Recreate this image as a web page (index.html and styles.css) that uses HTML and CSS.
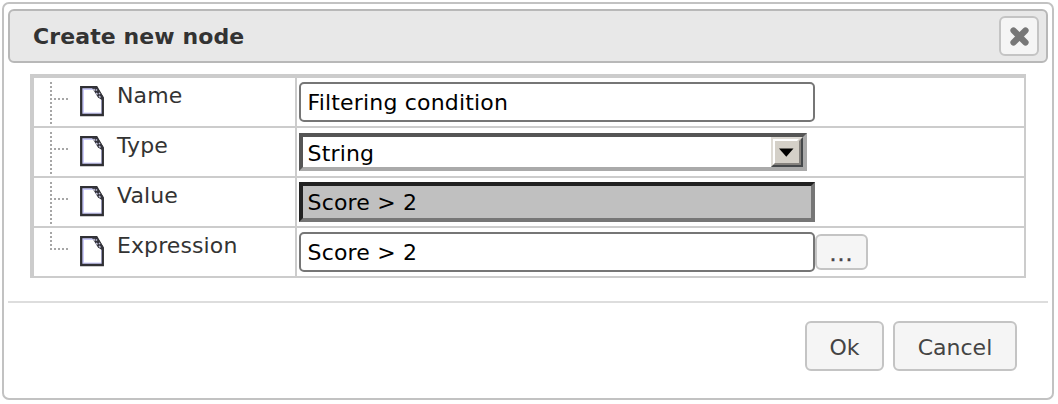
FILE: index.html
```html
<!DOCTYPE html>
<html lang="en">
<head>
<meta charset="utf-8">
<title>Create new node</title>
<link rel="stylesheet" href="styles.css">
</head>
<body>
<svg class="defs" width="0" height="0">
  <symbol id="doc" viewBox="0 0 28 34">
    <path d="M2 2H17.500L24 13V30H2Z" fill="#fff"/>
    <path d="M4 29V4H14M4 28.500H23V15" fill="none" stroke="#ccccfa" stroke-width="2"/>
    <path d="M2.200 2.200H17.500L23.800 13V30H2.200Z" fill="none" stroke="#303034" stroke-width="2.300"/>
    <path d="M12.500 2H18L24.500 12V16L19 12.500Z" fill="#34343c"/>
    <path d="M14.500 4l1.500 1.500M17 4.500l1 1M17 8l1.500 1.500M20 8l1 1M20 11l1.500 1.500" stroke="#c4c4dc" stroke-width="1.500"/>
  </symbol>
  <symbol id="branch" viewBox="0 0 22 48">
    <path d="M2 4V47M5 21H20" fill="none" stroke="#a6a6a6" stroke-width="2" stroke-dasharray="2 2"/>
  </symbol>
  <symbol id="last" viewBox="0 0 22 48">
    <path d="M2 4V21M1 21H20" fill="none" stroke="#a6a6a6" stroke-width="2" stroke-dasharray="2 2"/>
  </symbol>
</svg>
<div class="dialog">
  <header class="titlebar">
    <h1 class="title">Create new node</h1>
    <button class="btn close" aria-label="Close"><svg width="20" height="20" viewBox="0 0 20 20"><path d="M4.500 4.500L16.500 16.500M16.500 4.500L4.500 16.500" stroke="#777" stroke-width="6.200" stroke-linecap="round"/></svg></button>
  </header>
  <main class="grid">
    <div class="label"><svg class="tree"><use href="#branch"/></svg><svg class="doc"><use href="#doc"/></svg><span class="name">Name</span></div>
    <div class="cell"><div class="field">Filtering condition</div></div>
    <div class="label"><svg class="tree"><use href="#branch"/></svg><svg class="doc"><use href="#doc"/></svg><span class="name">Type</span></div>
    <div class="cell"><div class="select"><span>String</span><svg class="arrow" width="32" height="30" viewBox="0 0 32 30"><path d="M0 0H32V30H0Z" fill="#d4d0c8"/><path d="M0 0H32L28 2H2V28L0 30Z" fill="#dedbd5"/><path d="M2 2H28L26 4H4V26L2 28Z" fill="#fff"/><path d="M32 0V30H0L2 28H30V2Z" fill="#45484b"/><path d="M30 2V28H2L4 26H28V4Z" fill="#85827e"/><path d="M8 11.500H22.500L15.300 19.800Z" fill="#000"/></svg></div></div>
    <div class="label"><svg class="tree"><use href="#branch"/></svg><svg class="doc"><use href="#doc"/></svg><span class="name">Value</span></div>
    <div class="cell"><div class="field disabled">Score &gt; 2</div></div>
    <div class="label"><svg class="tree"><use href="#last"/></svg><svg class="doc"><use href="#doc"/></svg><span class="name">Expression</span></div>
    <div class="cell"><div class="field">Score &gt; 2</div><button class="btn more">...</button></div>
  </main>
  <footer class="actions"><button class="btn ok">Ok</button><button class="btn cancel">Cancel</button></footer>
</div>
</body>
</html>
```
FILE: styles.css
```css
* { box-sizing: border-box; }
body { margin: 0; padding: 2px; background: #fff; font: 22px/26px Verdana, "DejaVu Sans", sans-serif; color: #333; }
.defs { position: absolute; }
svg { display: block; flex: none; }
.dialog { width: 1052px; height: 398px; border: 2px solid #c2c2c2; border-radius: 7px; padding: 5px 4px; display: flex; flex-direction: column; }
.titlebar { height: 54px; border: 2px solid #b8b8b8; border-radius: 6px; background: #e8e8e8; display: flex; align-items: center; justify-content: space-between; padding: 0 7px 0 23px; }
.title { margin: 0; padding-top: 2px; font-size: 22px; line-height: 26px; font-weight: bold; letter-spacing: 0.1px; }
.btn { font: inherit; color: #444; background: #f5f5f5; border: 2px solid #c4c4c4; border-radius: 6px; padding: 0; display: flex; align-items: center; justify-content: center; }
.close { width: 40px; height: 40px; }
.grid { width: 996px; height: 204px; margin: 11px 0 0 22px; border: solid #ccc; border-width: 4px 2px 2px 4px; display: grid; grid-template-columns: 261px 1fr; grid-template-rows: repeat(4, 48px); row-gap: 2px; column-gap: 2px; background: #ccc; }
.label { background: #fff; display: flex; padding-left: 15px; }
.tree { width: 22px; height: 48px; }
.doc { width: 28px; height: 34px; margin: 7px 0 0 8px; }
.name { margin: 5px 0 0 10px; letter-spacing: 0.1px; }
.cell { background: #fff; display: flex; padding: 4px 2px; color: #000; letter-spacing: 0.18px; }
.field { width: 516px; height: 40px; border: 2px solid #767676; border-radius: 5px; background: #fff; padding: 5px 6.5px 0; line-height: 27px; white-space: nowrap; }
.disabled { background: #c0c0c0; border: 4px solid; border-color: #212121 #767676 #767676 #212121; border-radius: 0; padding: 3px 4.5px 0; }
.select { width: 508px; height: 38px; margin-top: 1px; border: 4px solid; border-color: #555 #aaa #aaa #555; display: flex; justify-content: space-between; padding-left: 4.5px; line-height: 34px; }
.select span { height: 30px; }
.more { width: 53px; height: 36px; margin-top: 2px; padding-top: 4px; letter-spacing: 1px; -webkit-text-stroke: 0.4px #444; }
.actions { margin-top: 23px; border-top: 2px solid #ddd; padding: 18px 31px 0 0; display: flex; justify-content: flex-end; gap: 9px; }
.ok, .cancel { height: 50px; padding-top: 3px; }
.ok { width: 79px; }
.cancel { width: 124px; }
```
